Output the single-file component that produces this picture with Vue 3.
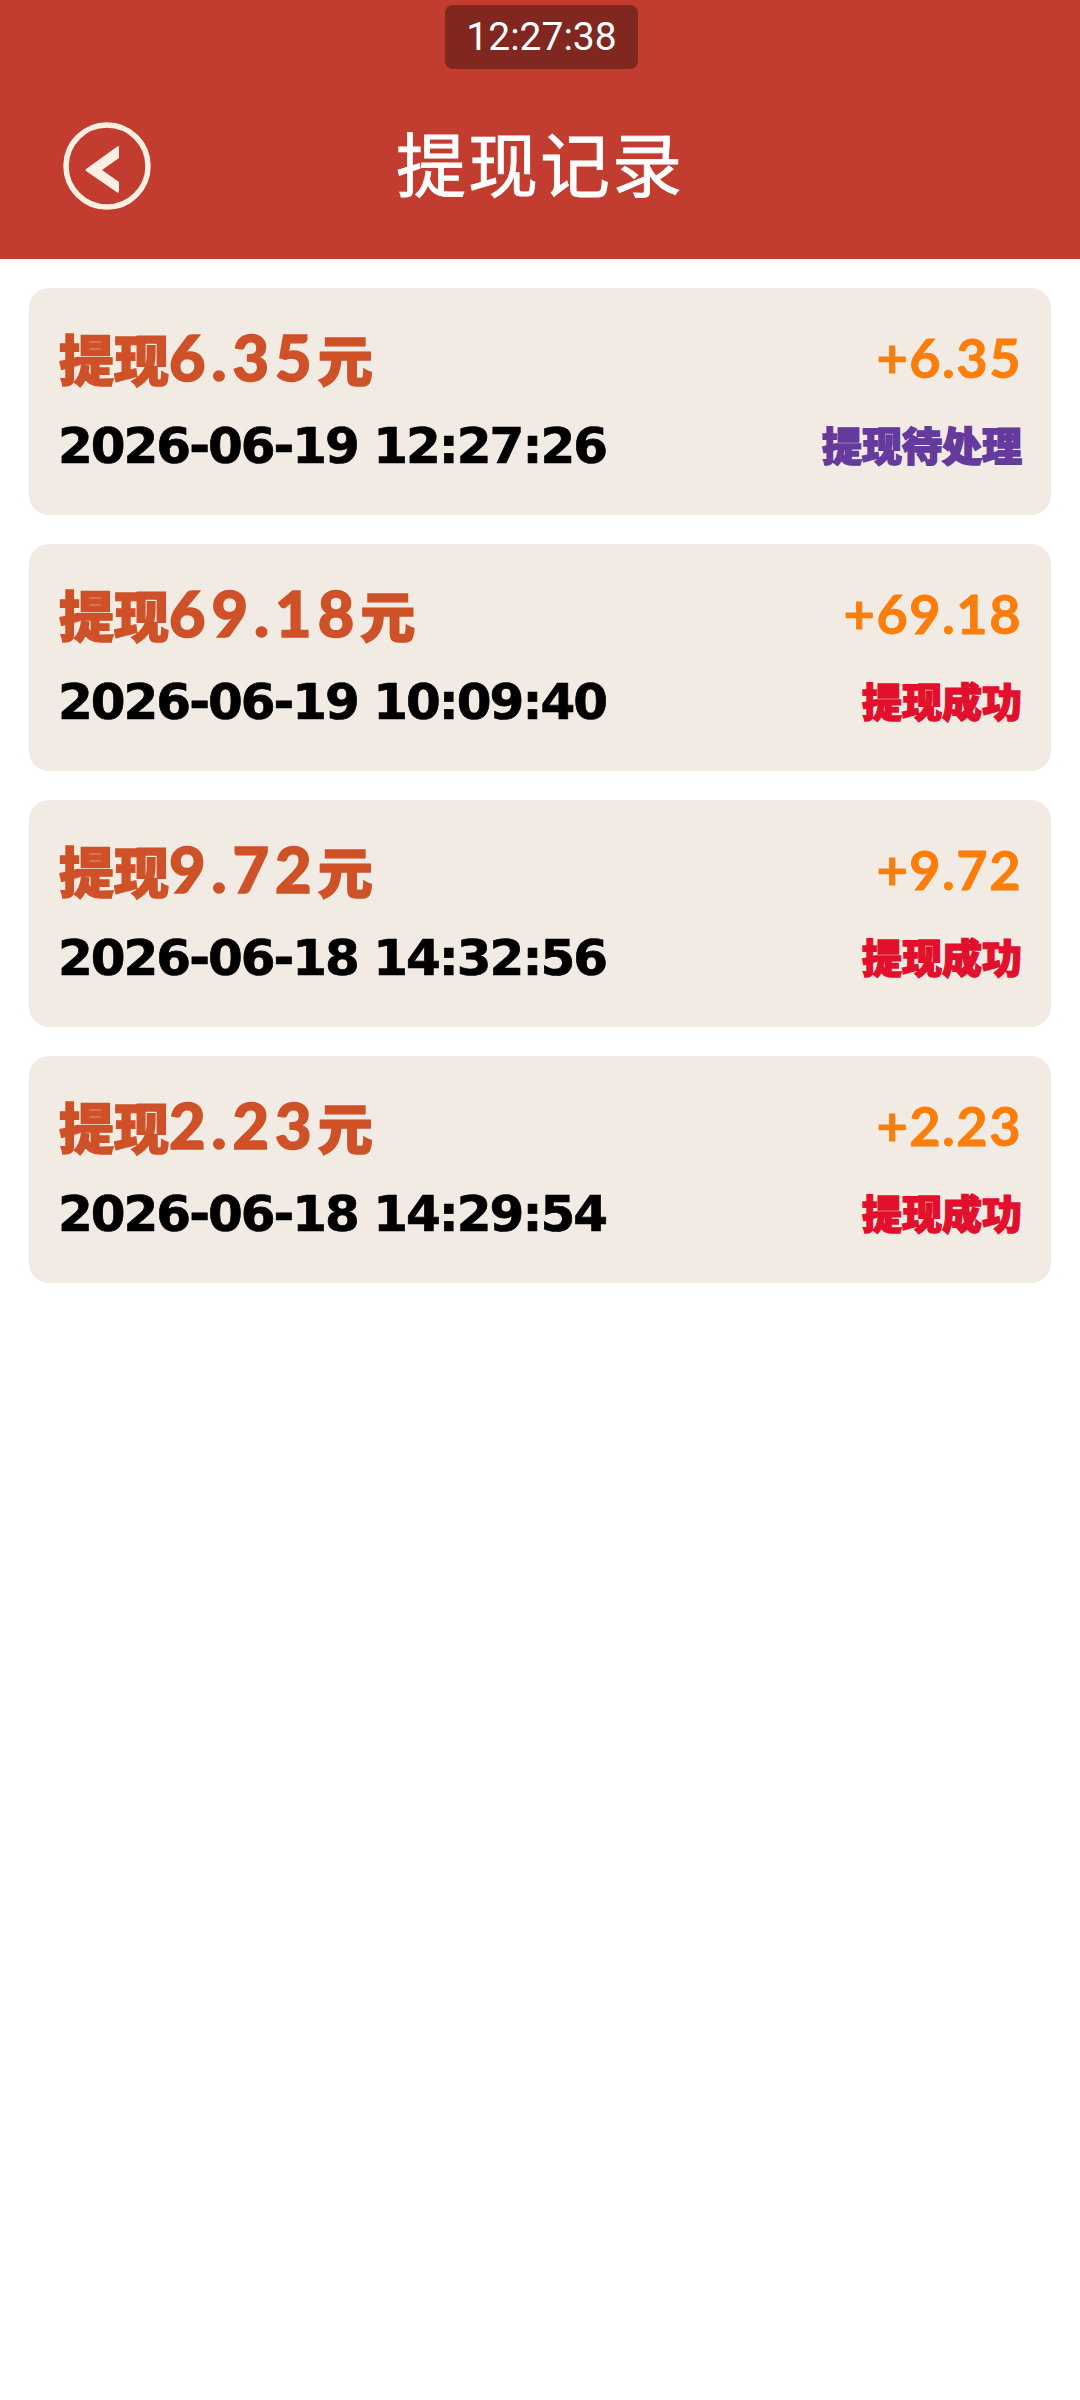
<template>
  <div class="page">
    <header class="bar">
      <div class="clock">12:27:38</div>
      <div class="nav">
        <svg class="back" viewBox="0 0 88 88" width="88" height="88">
          <circle cx="44" cy="44" r="41" fill="none" stroke="#fdf0e2" stroke-width="5.5" />
          <path d="M55 24 L23 47 Q22 48 23 49 L55 71 Q56 70 56 68 L56 60 L39 48 L56 36 L56 26 Q56 24 55 24 Z" fill="#fdf0e2" />
        </svg>
        <h1 class="title">提现记录</h1>
      </div>
    </header>
    <main class="list">
      <div v-for="r in records" :key="r.time" class="card">
        <div class="row">
          <span class="label">提现<span class="num">{{ r.amount }}</span>元</span>
          <span class="plus">+{{ r.amount }}</span>
        </div>
        <div class="row second">
          <span class="time">{{ r.time }}</span>
          <span class="status" :class="{ pending: r.pending }">{{ r.status }}</span>
        </div>
      </div>
    </main>
  </div>
</template>

<script setup>
const records = [
  { amount: '6.35', time: '2026-06-19 12:27:26', status: '提现待处理', pending: true },
  { amount: '69.18', time: '2026-06-19 10:09:40', status: '提现成功' },
  { amount: '9.72', time: '2026-06-18 14:32:56', status: '提现成功' },
  { amount: '2.23', time: '2026-06-18 14:29:54', status: '提现成功' }
]
</script>

<style>
body {
  background: #fff;
}
</style>

<style scoped>
.page {
  width: 1080px;
  min-height: 2400px;
  background: #fff;
  font-family: "Lato", "Noto Sans CJK SC", sans-serif;
}
.bar {
  height: 259px;
  background: #c23c30;
  position: relative;
  box-sizing: border-box;
  padding-top: 80px;
}
.clock {
  position: absolute;
  left: 445px;
  top: 5px;
  width: 193px;
  height: 64px;
  border-radius: 8px;
  background: #80271f;
  color: #fff;
  font-family: "Roboto", sans-serif;
  font-size: 39px;
  line-height: 64px;
  text-align: center;
}
.nav {
  position: relative;
  height: 170px;
  display: flex;
  align-items: center;
  justify-content: center;
}
.back {
  position: absolute;
  left: 63px;
  top: 42px;
}
.title {
  margin: 0;
  color: #fff;
  font-family: "Noto Sans CJK SC", sans-serif;
  font-weight: 400;
  font-size: 70px;
  letter-spacing: 2px;
  line-height: 1;
  position: relative;
  top: -3px;
  -webkit-text-stroke: 0.8px #fff;
}
.list {
  display: flex;
  flex-direction: column;
  gap: 29px;
  padding: 29px 29px;
}
.card {
  height: 227px;
  background: #f2ebe4;
  border-radius: 20px;
  box-sizing: border-box;
  padding: 36px 29px 0 30px;
}
.row {
  display: flex;
  justify-content: space-between;
  align-items: center;
  height: 66px;
}
.second {
  height: 60px;
  margin-top: 24px;
}
.label {
  color: #cf5128;
  font-size: 55px;
  font-weight: 900;
  -webkit-text-stroke: 1.5px #cf5128;
}
.num {
  font-size: 63px;
  letter-spacing: 6px;
  line-height: 1;
}
.plus {
  color: #fb7d0c;
  font-size: 54px;
  font-weight: 700;
  letter-spacing: 1.5px;
  -webkit-text-stroke: 0.8px #fb7d0c;
}
.time {
  color: #000;
  font-family: "DejaVu Sans", sans-serif;
  font-size: 50px;
  font-weight: 700;
  letter-spacing: -2px;
  margin-left: -1px;
  position: relative;
  top: 2px;
  -webkit-text-stroke: 0.7px #000;
}
.status {
  color: #e3102c;
  font-size: 40px;
  font-weight: 900;
  -webkit-text-stroke: 1.5px #e3102c;
}
.status.pending {
  color: #643a9d;
  -webkit-text-stroke-color: #643a9d;
}
</style>
